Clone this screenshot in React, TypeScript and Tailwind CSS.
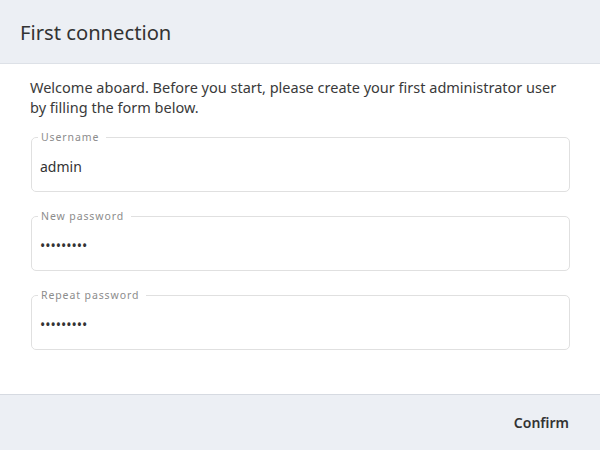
import { useState } from 'react'

const FIELDS = [
  { label: 'Username', type: 'text', value: 'admin' },
  { label: 'New password', type: 'password', value: 'admin1234' },
  { label: 'Repeat password', type: 'password', value: 'admin1234' },
]

export default function App() {
  const [values, setValues] = useState(FIELDS.map((f) => f.value))

  return (
    <div className="h-[450px] w-[600px] flex flex-col bg-white text-[#333] font-['Noto_Sans',sans-serif]">
      <div className="h-[64px] shrink-0 flex items-center px-5 bg-[#eceff4] border-b border-[#dde1e7]">
        <h1 className="text-[20.2px] leading-none pt-[1px]">First connection</h1>
      </div>

      <div className="flex-1 px-[30px] pt-[14px]">
        <p className="text-[14.5px] leading-[19.5px] text-[#3a3a3a]">
          Welcome aboard. Before you start, please create your first administrator user by filling the form below.
        </p>

        <div className="mt-[14px] ml-px flex flex-col gap-[18px]">
          {FIELDS.map((field, i) => (
            <fieldset key={field.label} className="border border-[#e0e0e0] rounded-[5px] px-[6px] pb-[5px] min-w-0">
              <legend className="pl-[3px] pr-[7px] text-[10.5px] leading-[12px] tracking-[0.9px] text-[#8c8c8c]">{field.label}</legend>
              <input
                type={field.type}
                value={values[i]}
                onChange={(e) => setValues(values.map((v, j) => (j === i ? e.target.value : v)))}
                className="w-full h-[40px] mt-[3px] px-[2px] text-[14px] text-[#333] outline-none bg-transparent"
              />
            </fieldset>
          ))}
        </div>
      </div>

      <div className="h-[56px] shrink-0 flex items-center justify-end px-[31px] bg-[#eceff4] border-t border-[#d6dae1]">
        <button className="text-[14px] font-semibold text-[#333]">Confirm</button>
      </div>
    </div>
  )
}
